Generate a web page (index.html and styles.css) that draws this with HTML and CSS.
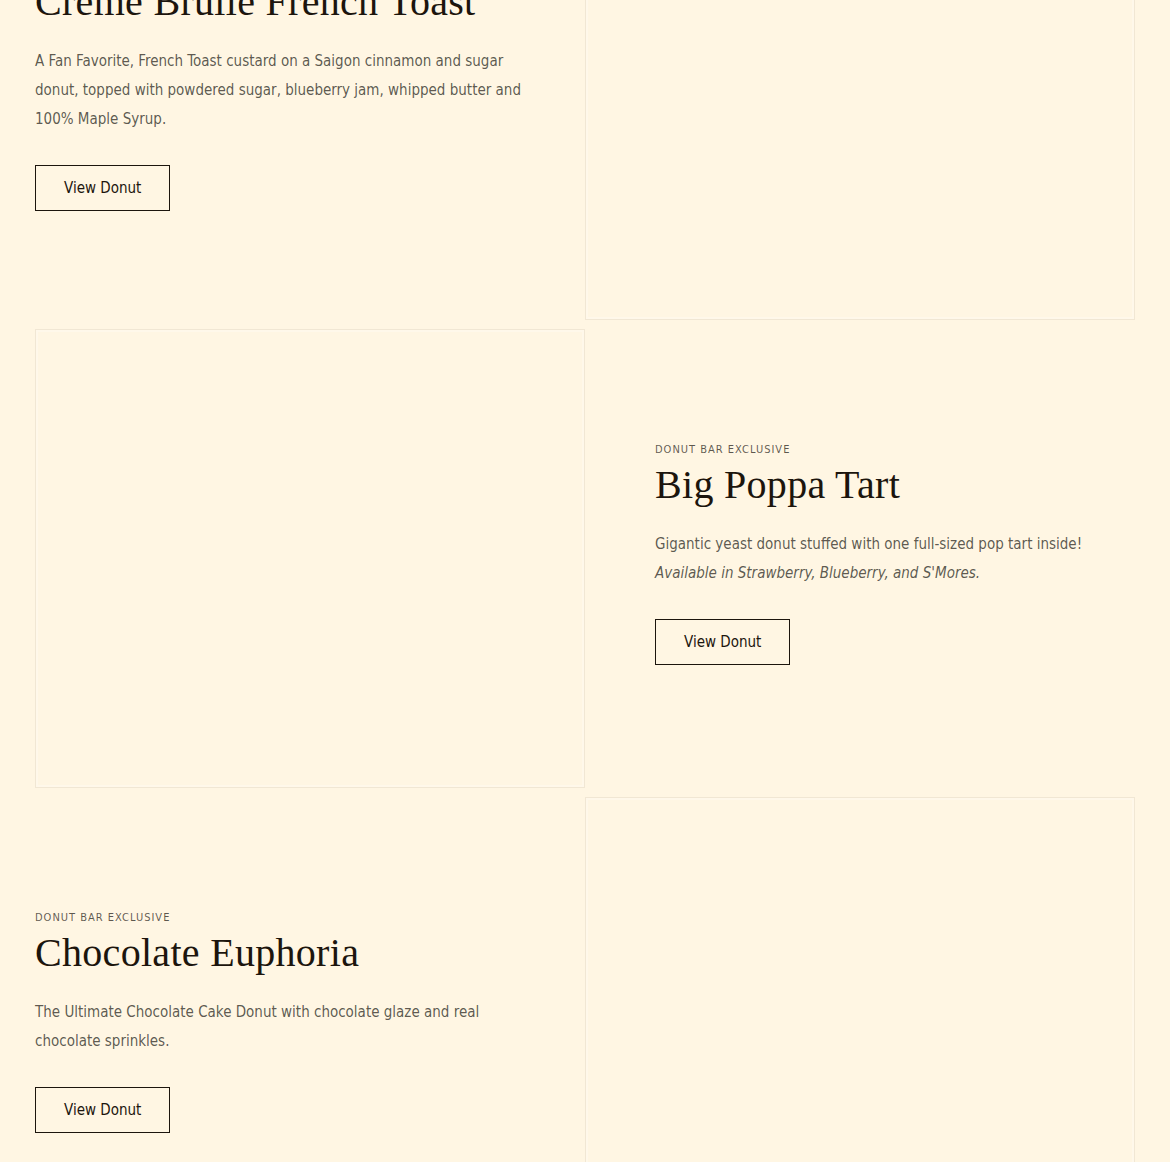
FILE: index.html
```html
<!DOCTYPE html>
<html>
<head>
  <title>Donut Bar Exclusives</title>
<link rel="stylesheet" href="styles.css"></head>
<body>

  <div class="page">

    <div class="feature">
      <div class="feature-text">
        <p class="caption">Donut Bar Exclusive</p>
        <h2 class="title">Creme Brulle French Toast</h2>
        <p class="desc">A Fan Favorite, French Toast custard on a Saigon cinnamon and sugar donut, topped with powdered sugar, blueberry jam, whipped butter and 100% Maple Syrup.</p>
        <a class="button" href="#">View Donut</a>
      </div>
      <div class="feature-media"></div>
    </div>

    <div class="feature feature-flip">
      <div class="feature-media"></div>
      <div class="feature-text">
        <p class="caption">Donut Bar Exclusive</p>
        <h2 class="title">Big Poppa Tart</h2>
        <p class="desc">Gigantic yeast donut stuffed with one full-sized pop tart inside!<br><em>Available in Strawberry, Blueberry, and S'Mores.</em></p>
        <a class="button" href="#">View Donut</a>
      </div>
    </div>

    <div class="feature">
      <div class="feature-text">
        <p class="caption">Donut Bar Exclusive</p>
        <h2 class="title">Chocolate Euphoria</h2>
        <p class="desc">The Ultimate Chocolate Cake Donut with chocolate glaze and real chocolate sprinkles.</p>
        <a class="button" href="#">View Donut</a>
      </div>
      <div class="feature-media"></div>
    </div>

  </div>

</body>
</html>
```

FILE: styles.css
```css
body {
  margin: 0;
  background-color: #fff6e3;
  color: #1c150d;
  font-family: "DejaVu Sans Condensed", "DejaVu Sans", sans-serif;
  overflow: hidden;
}

.page {
  padding: 0 35px;
  margin-top: -139px;
  display: flex;
  flex-direction: column;
  gap: 9px;
}

.feature {
  display: grid;
  grid-template-columns: 1fr 1fr;
  height: 459px;
}

.feature-media {
  border: 1px solid rgba(60, 40, 10, 0.07);
  box-shadow: inset 0 0 0 2px rgba(255, 250, 238, 0.6);
}

.feature-text {
  display: flex;
  flex-direction: column;
  justify-content: center;
  align-items: flex-start;
  padding: 0 55px 9px 0;
}

.feature-flip .feature-text {
  padding: 0 0 9px 70px;
}

.caption {
  margin: 0 0 2px;
  font-size: 11px;
  line-height: 1.2;
  letter-spacing: 1px;
  text-transform: uppercase;
  color: rgba(30, 25, 20, 0.72);
}

.title {
  margin: 0;
  font-family: "Liberation Serif", serif;
  font-weight: normal;
  font-size: 40px;
  line-height: 1.3;
  letter-spacing: 0.3px;
}

.desc {
  margin: 19px 0 0;
  font-size: 15px;
  line-height: 29px;
  color: rgba(35, 30, 24, 0.74);
}

.button {
  margin-top: 31px;
  display: inline-flex;
  align-items: center;
  justify-content: center;
  height: 46px;
  padding: 0 28px;
  box-sizing: border-box;
  border: 1px solid #1c150d;
  color: #1c150d;
  text-decoration: none;
  font-size: 15px;
}
```
